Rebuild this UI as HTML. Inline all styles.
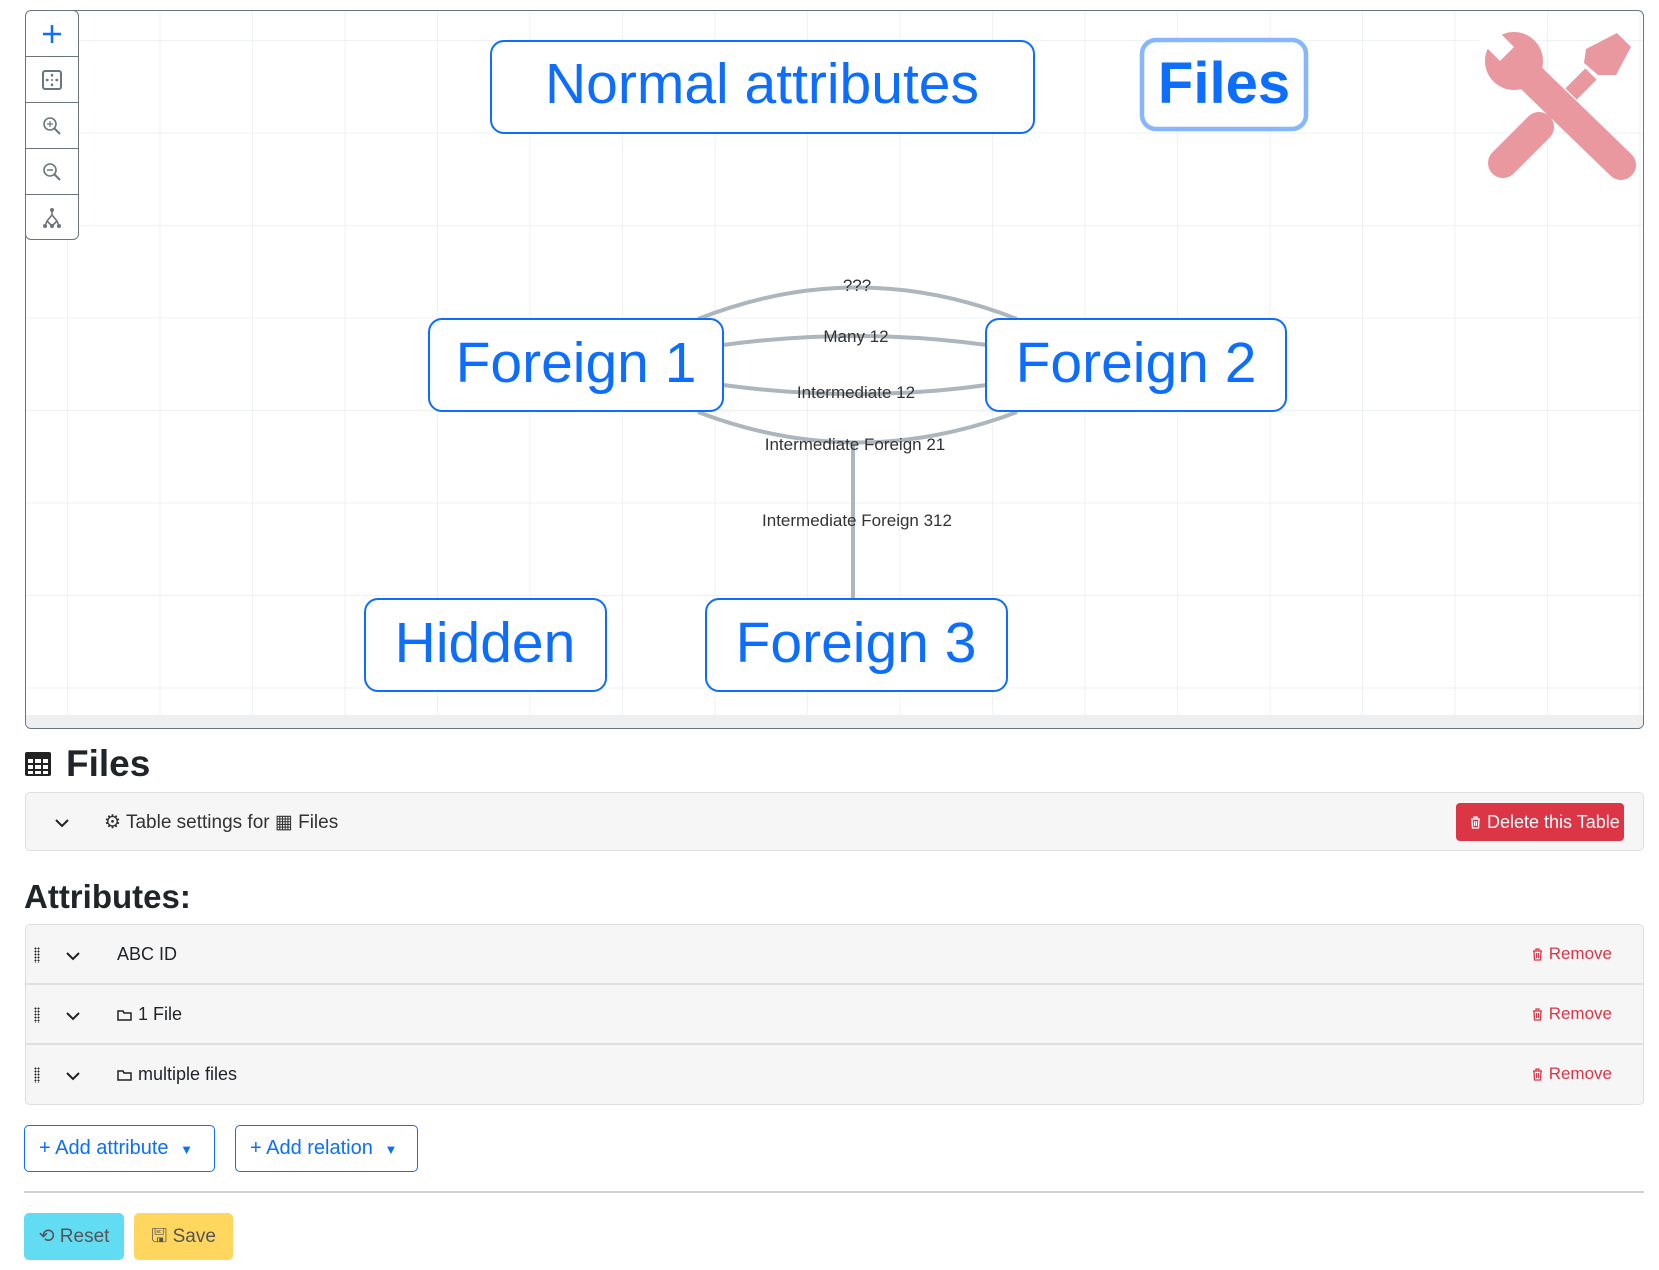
<!DOCTYPE html>
<html><head><meta charset="utf-8"><style>
*{box-sizing:border-box;margin:0;padding:0}
body{width:1659px;height:1270px;background:#fff;font-family:"Liberation Sans",sans-serif;color:#212529;position:relative;overflow:hidden}
.abs{position:absolute}
.canvas{left:25px;top:10px;width:1619px;height:719px;border:1.5px solid #6c757d;border-radius:6px;overflow:hidden;
background-color:#fff;
background-image:linear-gradient(90deg,rgba(220,225,230,.45) 1px,transparent 1px),linear-gradient(rgba(220,225,230,.45) 1px,transparent 1px);
background-size:92.5px 92.5px;background-position:41px 29px}
.strip{left:0;right:0;bottom:0;height:13px;background:#eeeff1}
.tb{left:-1px;top:-1px;width:54px;height:230px;border:1.5px solid #6c757d;border-radius:6px;background:#fff}
.tb div{height:46px;border-bottom:1.5px solid #6c757d;display:flex;align-items:center;justify-content:center}
.tb div:last-child{border-bottom:none}
.card{left:25px;width:1619px;background:#f6f6f6;border:1px solid #dfdfdf;border-radius:5px}
.row{position:absolute;left:0;right:0;height:60px;border-bottom:2px solid #e0e0e0;font-size:18px}
.chev{position:absolute}
.rm{position:absolute;right:31px;top:19px;color:#dc3545;font-size:17px;display:flex;align-items:center;gap:6px}
.grip{position:absolute;left:8px;top:22px;width:6px;height:16px;background-image:radial-gradient(circle,#222 0.9px,transparent 1.1px);background-size:3px 3px}
.btno{position:absolute;border:1.5px solid #0d6efd;border-radius:5px;color:#0d6efd;font-size:20px;height:47px;line-height:44px;padding-left:14px;white-space:nowrap}
</style></head><body>

<div class="abs canvas">
<svg class="abs" style="left:-25px;top:-10px" width="1659" height="740">
<g fill="none" stroke="#adb5bd" stroke-width="4">
<path d="M697 318 Q856 255 1016 318"/>
<path d="M722 344 Q856 326 986 344"/>
<path d="M722 384 Q856 402 986 384"/>
<path d="M697 411 Q856 472 1016 411"/>
<path d="M852 444 L852 598"/>
</g>
<g font-family="Liberation Sans,sans-serif" font-size="17" fill="#333" text-anchor="middle">
<text x="856" y="290">???</text>
<text x="855" y="341">Many 12</text>
<text x="855" y="397">Intermediate 12</text>
<text x="854" y="449">Intermediate Foreign 21</text>
<text x="856" y="525">Intermediate Foreign 312</text>
</g>
<g fill="#fff" stroke="#0d6efd" stroke-width="2">
<rect x="490" y="40" width="543" height="92" rx="13"/>
<rect x="428" y="318" width="294" height="92" rx="13"/>
<rect x="985" y="318" width="300" height="92" rx="13"/>
<rect x="364" y="598" width="241" height="92" rx="13"/>
<rect x="705" y="598" width="301" height="92" rx="13"/>
</g>
<rect x="1141" y="39" width="164" height="89" rx="14" fill="#fff" stroke="#86b7fe" stroke-width="4.5"/>
<g font-family="Liberation Sans,sans-serif" font-size="57" fill="#0d6efd" text-anchor="middle">
<text x="761" y="102">Normal attributes</text>
<text x="575" y="381">Foreign 1</text>
<text x="1135" y="381">Foreign 2</text>
<text x="484" y="661">Hidden</text>
<text x="855" y="661">Foreign 3</text>
<text x="1223" y="102" font-weight="bold" font-size="58">Files</text>
</g>
<g fill="#ea98a0" stroke="#ea98a0" stroke-linecap="round">
<line x1="1525" y1="72" x2="1620" y2="164" stroke-width="30"/>
<circle cx="1513" cy="60" r="29" stroke="none"/>
<line x1="1502" y1="162" x2="1538" y2="126" stroke-width="30"/>
<line x1="1570" y1="93" x2="1590" y2="73" stroke-width="16" stroke-linecap="butt"/>
<polygon points="1585,48 1616,32 1630,46 1615,74 1597,74 1583,62" stroke="none"/>
</g>
<polygon points="1513,46 1499,60 1474,35 1488,21" fill="#fff"/>
</svg>
<div class="abs tb">
<div><svg width="24" height="24"><path d="M12 3V21M3 12H21" stroke="#0d6efd" stroke-width="2.5"/></svg></div>
<div><svg width="22" height="22"><rect x="2" y="2" width="18" height="18" rx="2" fill="none" stroke="#6c757d" stroke-width="2"/><path d="M11 6V16M6 11H16" stroke="#6c757d" stroke-width="1" stroke-dasharray="2 2"/><circle cx="11" cy="6" r="1.3" fill="#6c757d"/><circle cx="11" cy="16" r="1.3" fill="#6c757d"/><circle cx="6" cy="11" r="1.3" fill="#6c757d"/><circle cx="16" cy="11" r="1.3" fill="#6c757d"/></svg></div>
<div><svg width="20" height="20"><circle cx="8" cy="8" r="6" fill="none" stroke="#6c757d" stroke-width="1.6"/><path d="M12.5 12.5L18 18" stroke="#6c757d" stroke-width="2"/><path d="M8 5V11M5 8H11" stroke="#6c757d" stroke-width="1.2"/></svg></div>
<div><svg width="20" height="20"><circle cx="8" cy="8" r="6" fill="none" stroke="#6c757d" stroke-width="1.6"/><path d="M12.5 12.5L18 18" stroke="#6c757d" stroke-width="2"/><path d="M5 8H11" stroke="#6c757d" stroke-width="1.5"/></svg></div>
<div><svg width="22" height="22"><path d="M11 3L11 8L6 14L4 19M11 8L16 14L18 19M6 14L11 19M16 14L11 19" fill="none" stroke="#6c757d" stroke-width="1.6"/><circle cx="11" cy="3" r="2" fill="#6c757d"/><circle cx="4" cy="19" r="2" fill="#6c757d"/><circle cx="11" cy="19" r="2" fill="#6c757d"/><circle cx="18" cy="19" r="2" fill="#6c757d"/></svg></div>
</div>
<div class="abs strip"></div>
</div>

<div class="abs" style="left:24px;top:744px;display:flex;align-items:center">
<svg width="28" height="26" style="margin-right:14px"><rect x="1" y="1" width="26" height="24" rx="2" fill="#222"/><g fill="#fff"><rect x="4" y="8" width="5" height="4"/><rect x="11" y="8" width="6" height="4"/><rect x="19" y="8" width="5" height="4"/><rect x="4" y="14" width="5" height="4"/><rect x="11" y="14" width="6" height="4"/><rect x="19" y="14" width="5" height="4"/><rect x="4" y="20" width="5" height="3"/><rect x="11" y="20" width="6" height="3"/><rect x="19" y="20" width="5" height="3"/></g></svg>
<span style="font-size:37px;font-weight:bold;line-height:40px">Files</span></div>

<div class="abs card" style="top:792px;height:59px">
<svg class="chev" style="left:28px;top:24px" width="16" height="12"><path d="M2 3L8 9L14 3" fill="none" stroke="#222" stroke-width="2"/></svg>
<div class="abs" style="left:78px;top:18px;font-size:19px;color:#333">⚙ Table settings for ▦ Files</div>
<div class="abs" style="left:1430px;top:10px;width:168px;height:38px;background:#dc3545;border-radius:4px;color:#fff;font-size:18px;line-height:38px;padding-left:14px;white-space:nowrap;display:flex;align-items:center;gap:6px">
<svg width="11" height="13"><path d="M1 3H10M4 3V1H7V3M2 3L2.5 12H8.5L9 3M4.5 5V10M6.5 5V10" fill="none" stroke="#fff" stroke-width="1.3"/></svg>Delete this Table</div>
</div>

<div class="abs" style="left:24px;top:878px;font-size:33px;font-weight:bold">Attributes:</div>

<div class="abs card" style="top:924px;height:181px">
<div class="row" style="top:0"><div class="grip"></div><svg class="chev" style="left:39px;top:25px" width="16" height="12"><path d="M2 3L8 9L14 3" fill="none" stroke="#222" stroke-width="2"/></svg><div class="abs" style="left:91px;top:19px">ABC ID</div><div class="rm"><svg width="11" height="13"><path d="M1 3H10M4 3V1H7V3M2 3L2.5 12H8.5L9 3M4.5 5V10M6.5 5V10" fill="none" stroke="#dc3545" stroke-width="1.3"/></svg>Remove</div></div>
<div class="row" style="top:60px"><div class="grip"></div><svg class="chev" style="left:39px;top:25px" width="16" height="12"><path d="M2 3L8 9L14 3" fill="none" stroke="#222" stroke-width="2"/></svg><div class="abs" style="left:91px;top:19px;display:flex;align-items:center;gap:6px"><svg width="15" height="12"><path d="M1 2H6L7 4H14V11H1Z" fill="none" stroke="#222" stroke-width="1.5"/></svg>1 File</div><div class="rm"><svg width="11" height="13"><path d="M1 3H10M4 3V1H7V3M2 3L2.5 12H8.5L9 3M4.5 5V10M6.5 5V10" fill="none" stroke="#dc3545" stroke-width="1.3"/></svg>Remove</div></div>
<div class="row" style="top:120px;border-bottom:none"><div class="grip"></div><svg class="chev" style="left:39px;top:25px" width="16" height="12"><path d="M2 3L8 9L14 3" fill="none" stroke="#222" stroke-width="2"/></svg><div class="abs" style="left:91px;top:19px;display:flex;align-items:center;gap:6px"><svg width="15" height="12"><path d="M1 2H6L7 4H14V11H1Z" fill="none" stroke="#222" stroke-width="1.5"/></svg>multiple files</div><div class="rm"><svg width="11" height="13"><path d="M1 3H10M4 3V1H7V3M2 3L2.5 12H8.5L9 3M4.5 5V10M6.5 5V10" fill="none" stroke="#dc3545" stroke-width="1.3"/></svg>Remove</div></div>
</div>

<div class="btno" style="left:24px;top:1125px;width:191px">+ Add attribute <span style="font-size:13px;margin-left:6px">▼</span></div>
<div class="btno" style="left:235px;top:1125px;width:183px">+ Add relation <span style="font-size:13px;margin-left:6px">▼</span></div>
<div class="abs" style="left:24px;top:1191px;width:1620px;height:2px;background:#d0d0d0"></div>
<div class="abs" style="left:24px;top:1213px;width:100px;height:47px;background:#61dcf3;border-radius:5px;color:#555;font-size:19px;line-height:47px;text-align:center">⟲ Reset</div>
<div class="abs" style="left:134px;top:1213px;width:99px;height:47px;background:#ffd75e;border-radius:5px;color:#555;font-size:19px;line-height:47px;text-align:center">🖫 Save</div>
</body></html>
